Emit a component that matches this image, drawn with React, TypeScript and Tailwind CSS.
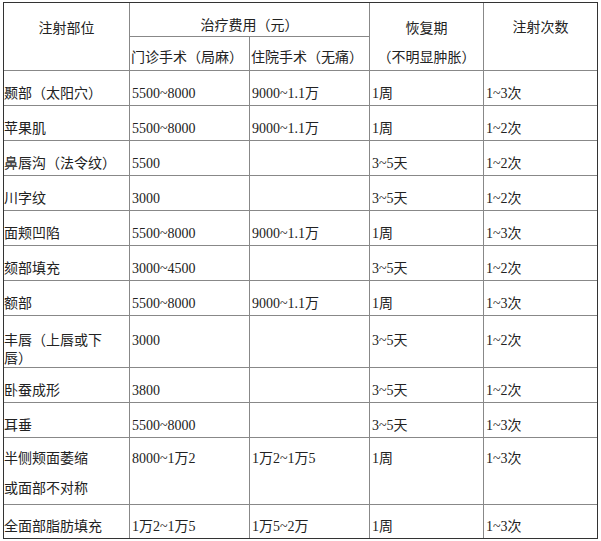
import type { ReactNode } from 'react'

const font = { fontFamily: '"Liberation Serif", "Noto Sans CJK SC", sans-serif' }

type Row = {
  part: ReactNode
  outpatient: string
  inpatient: string
  recovery: string
  times: string
  h: string
  pt: string
}

const rows: Row[] = [
  { part: '颞部（太阳穴）', outpatient: '5500~8000', inpatient: '9000~1.1万', recovery: '1周', times: '1~3次', h: 'h-[35px]', pt: 'pt-[14px]' },
  { part: '苹果肌', outpatient: '5500~8000', inpatient: '9000~1.1万', recovery: '1周', times: '1~2次', h: 'h-[35px]', pt: 'pt-[14px]' },
  { part: '鼻唇沟（法令纹）', outpatient: '5500', inpatient: '', recovery: '3~5天', times: '1~2次', h: 'h-[35px]', pt: 'pt-[14px]' },
  { part: '川字纹', outpatient: '3000', inpatient: '', recovery: '3~5天', times: '1~2次', h: 'h-[35px]', pt: 'pt-[14px]' },
  { part: '面颊凹陷', outpatient: '5500~8000', inpatient: '9000~1.1万', recovery: '1周', times: '1~3次', h: 'h-[35px]', pt: 'pt-[14px]' },
  { part: '颏部填充', outpatient: '3000~4500', inpatient: '', recovery: '3~5天', times: '1~2次', h: 'h-[35px]', pt: 'pt-[14px]' },
  { part: '额部', outpatient: '5500~8000', inpatient: '9000~1.1万', recovery: '1周', times: '1~3次', h: 'h-[35px]', pt: 'pt-[14px]' },
  {
    part: (
      <>
        丰唇（上唇或下
        <br />
        唇）
      </>
    ),
    outpatient: '3000',
    inpatient: '',
    recovery: '3~5天',
    times: '1~2次',
    h: 'h-[52px]',
    pt: 'pt-[16px]',
  },
  { part: '卧蚕成形', outpatient: '3800', inpatient: '', recovery: '3~5天', times: '1~2次', h: 'h-[35px]', pt: 'pt-[14px]' },
  { part: '耳垂', outpatient: '5500~8000', inpatient: '', recovery: '3~5天', times: '1~3次', h: 'h-[35px]', pt: 'pt-[14px]' },
  {
    part: (
      <>
        <div>半侧颊面萎缩</div>
        <div className="mt-[12px]">或面部不对称</div>
      </>
    ),
    outpatient: '8000~1万2',
    inpatient: '1万2~1万5',
    recovery: '1周',
    times: '1~3次',
    h: 'h-[67px]',
    pt: 'pt-[12px]',
  },
  { part: '全面部脂肪填充', outpatient: '1万2~1万5', inpatient: '1万5~2万', recovery: '1周', times: '1~3次', h: 'h-[33px]', pt: 'pt-[13px]' },
]

export default function App() {
  return (
    <div className="bg-white w-[601px] h-[541px] pt-[2px] pl-[3px] text-[14px] leading-[18px] text-[#222]" style={font}>
      <div className="w-[595px] border border-[#333] box-border grid grid-cols-[126px_120px_120px_114px_113px]">
        <div className="row-span-2 h-[68px] border-r border-b border-[#888] text-center pt-[17px]">注射部位</div>
        <div className="col-span-2 h-[34px] border-r border-b border-[#888] text-center pt-[14px]">治疗费用（元）</div>
        <div className="row-span-2 border-r border-b border-[#888] text-center pt-[17px]">
          <div>恢复期</div>
          <div className="mt-[11px]">（不明显肿胀）</div>
        </div>
        <div className="row-span-2 border-b border-[#888] text-center pt-[16px]">注射次数</div>
        <div className="h-[34px] border-r border-b border-[#888] pl-[1px] pt-[12px] whitespace-nowrap">门诊手术（局麻）</div>
        <div className="h-[34px] border-r border-b border-[#888] pl-[1px] pt-[12px] whitespace-nowrap">住院手术（无痛）</div>

        {rows.map((r, i) => {
          const last = i === rows.length - 1
          const b = last ? '' : 'border-b'
          return (
            <div key={i} className="contents">
              <div className={`${r.h} ${r.pt} ${b} border-r border-[#888] whitespace-nowrap`}>{r.part}</div>
              <div className={`${r.h} ${r.pt} ${b} border-r border-[#888] pl-[2px]`}>{r.outpatient}</div>
              <div className={`${r.h} ${r.pt} ${b} border-r border-[#888] pl-[2px]`}>{r.inpatient}</div>
              <div className={`${r.h} ${r.pt} ${b} border-r border-[#888] pl-[2px]`}>{r.recovery}</div>
              <div className={`${r.h} ${r.pt} ${b} border-[#888] pl-[2px]`}>{r.times}</div>
            </div>
          )
        })}
      </div>
    </div>
  )
}
